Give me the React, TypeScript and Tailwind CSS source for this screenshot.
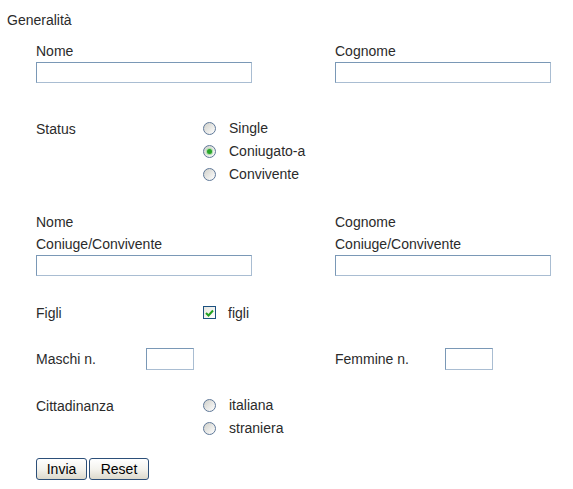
import React from 'react';

const inputCls =
  "block h-[21px] bg-white border border-t-[#7a98b6] border-l-[#7a98b6] border-r-[#a9bdd2] border-b-[#a9bdd2] outline-none";

const Radio: React.FC<{ label: string; checked?: boolean }> = ({ label, checked }) => (
  <div className="flex items-center h-[23px]">
    <span className="w-[13px] h-[13px] rounded-full border border-[#5f7898] bg-gradient-to-br from-[#d0d0ca] to-white flex items-center justify-center">
      {checked && <span className="w-[5px] h-[5px] rounded-full bg-[#2aa52a] shadow-[0_0_1px_1px_#a8dca8]" />}
    </span>
    <span className="ml-[13px]">{label}</span>
  </div>
);

const Btn: React.FC<{ label: string; w: string }> = ({ label, w }) => (
  <button
    type="button"
    className={
      "h-[22px] rounded-[3px] border border-[#2c4f79] bg-gradient-to-b from-white via-[#f4f3ee] to-[#dcd9cc] text-black text-[14px] leading-none " +
      w
    }
  >
    {label}
  </button>
);

const App: React.FC = () => {
  return (
    <div className="w-[573px] h-[489px] bg-white text-[#2b2b2b] text-[14px] font-['Liberation_Sans',Arial,sans-serif]">
      <div className="pl-[7px] pt-[9px] leading-[22px]">Generalità</div>

      <div className="pl-[36px]">
        {/* nome / cognome */}
        <div className="grid grid-cols-[216px_216px] gap-x-[83px] mt-[9px]">
          <div>
            <div className="leading-[22px]">Nome</div>
            <input className={inputCls + " w-[216px]"} />
          </div>
          <div>
            <div className="leading-[22px]">Cognome</div>
            <input className={inputCls + " w-[216px]"} />
          </div>
        </div>

        {/* status */}
        <div className="grid grid-cols-[167px_auto] mt-[34px]">
          <div className="leading-[22px] mt-[1px]">Status</div>
          <div>
            <Radio label="Single" />
            <Radio label="Coniugato-a" checked />
            <Radio label="Convivente" />
          </div>
        </div>

        {/* coniuge */}
        <div className="grid grid-cols-[216px_216px] gap-x-[83px] mt-[25px]">
          <div>
            <div className="leading-[22px]">Nome</div>
            <div className="leading-[22px]">Coniuge/Convivente</div>
            <input className={inputCls + " w-[216px]"} />
          </div>
          <div>
            <div className="leading-[22px]">Cognome</div>
            <div className="leading-[22px]">Coniuge/Convivente</div>
            <input className={inputCls + " w-[216px]"} />
          </div>
        </div>

        {/* figli */}
        <div className="grid grid-cols-[167px_auto] mt-[25px] h-[22px] items-center">
          <div className="leading-[22px]">Figli</div>
          <div className="flex items-center">
            <span className="w-[13px] h-[13px] border border-[#1c5180] bg-gradient-to-br from-[#e6e6e0] to-white flex items-center justify-center">
              <svg width="9" height="8" viewBox="0 0 9 8">
                <path d="M1 4 L3.5 6.5 L8 1.5" fill="none" stroke="#21a121" strokeWidth="2" />
              </svg>
            </span>
            <span className="ml-[12px] mt-[2px]">figli</span>
          </div>
        </div>

        {/* maschi / femmine */}
        <div className="grid grid-cols-[216px_216px] gap-x-[83px] mt-[25px]">
          <div className="flex items-center">
            <span className="w-[110px] leading-[22px]">Maschi n.</span>
            <input className={inputCls + " w-[48px] h-[22px]"} />
          </div>
          <div className="flex items-center">
            <span className="w-[110px] leading-[22px]">Femmine n.</span>
            <input className={inputCls + " w-[48px] h-[22px]"} />
          </div>
        </div>

        {/* cittadinanza */}
        <div className="grid grid-cols-[167px_auto] mt-[24px]">
          <div className="leading-[22px] mt-[1px]">Cittadinanza</div>
          <div>
            <Radio label="italiana" />
            <Radio label="straniera" />
          </div>
        </div>

        <div className="flex gap-[2px] mt-[18px]">
          <Btn label="Invia" w="w-[51px]" />
          <Btn label="Reset" w="w-[60px]" />
        </div>
      </div>
    </div>
  );
};

export default App;
